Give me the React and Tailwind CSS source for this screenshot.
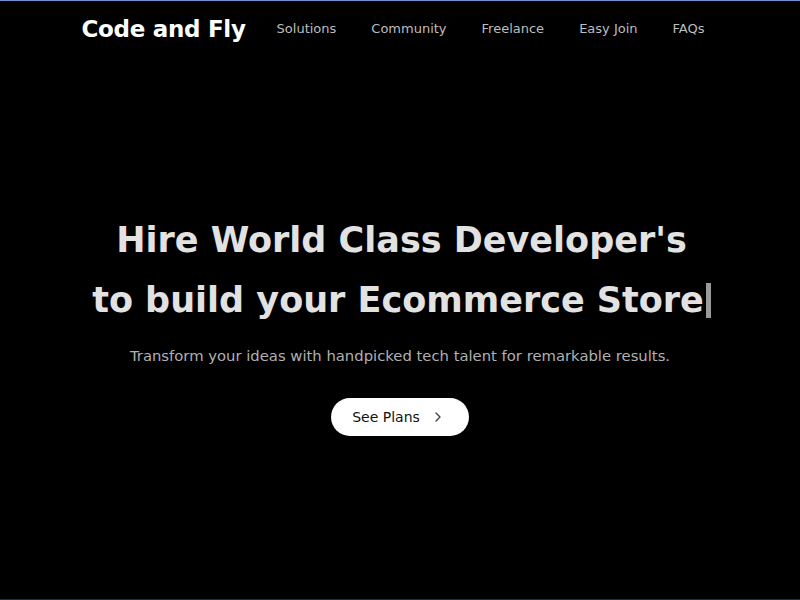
import React from 'react';
import { ChevronRight } from 'lucide-react';

const navLinks = ['Solutions', 'Community', 'Freelance', 'Easy Join', 'FAQs'];

const App = () => {
  return (
    <div
      className="flex flex-col h-[600px] w-full bg-black border-t border-t-[#6f92d2] border-b border-b-[#1b2b5c] text-[#e4e4e4] antialiased"
      style={{ fontFamily: '"DejaVu Sans", "Noto Sans", sans-serif' }}
    >
      <header className="flex items-center justify-center h-[56px] pr-[14px]">
        <span className="text-[23px] font-bold text-white mr-[31px] tracking-[-0.3px]">Code and Fly</span>
        <nav className="flex items-center gap-[35px]">
          {navLinks.map(link => (
            <a key={link} href="#" className="text-[13px] text-[#bdbdbd]">{link}</a>
          ))}
        </nav>
      </header>

      <main className="flex-1 flex flex-col items-center pt-[153px]">
        <h1 className="text-[35px] font-bold leading-[60px] text-center text-[#e2e2e2] pl-[3px]">
          Hire World Class Developer's
          <br />
          to build your Ecommerce Store<span className="inline-block w-[5px] h-[35px] bg-[#9a9a9a] align-[-6px] ml-[2px]"></span>
        </h1>
        <p className="mt-[15px] text-[14.8px] text-[#b0b0b0]">
          Transform your ideas with handpicked tech talent for remarkable results.
        </p>
        <button className="mt-[31px] flex items-center gap-[10px] h-[38px] pl-[21px] pr-[23px] rounded-full bg-white text-[#111] text-[14px]">
          See Plans
          <ChevronRight size={16} strokeWidth={2} className="text-[#444]" />
        </button>
      </main>
    </div>
  );
};

export default App;
